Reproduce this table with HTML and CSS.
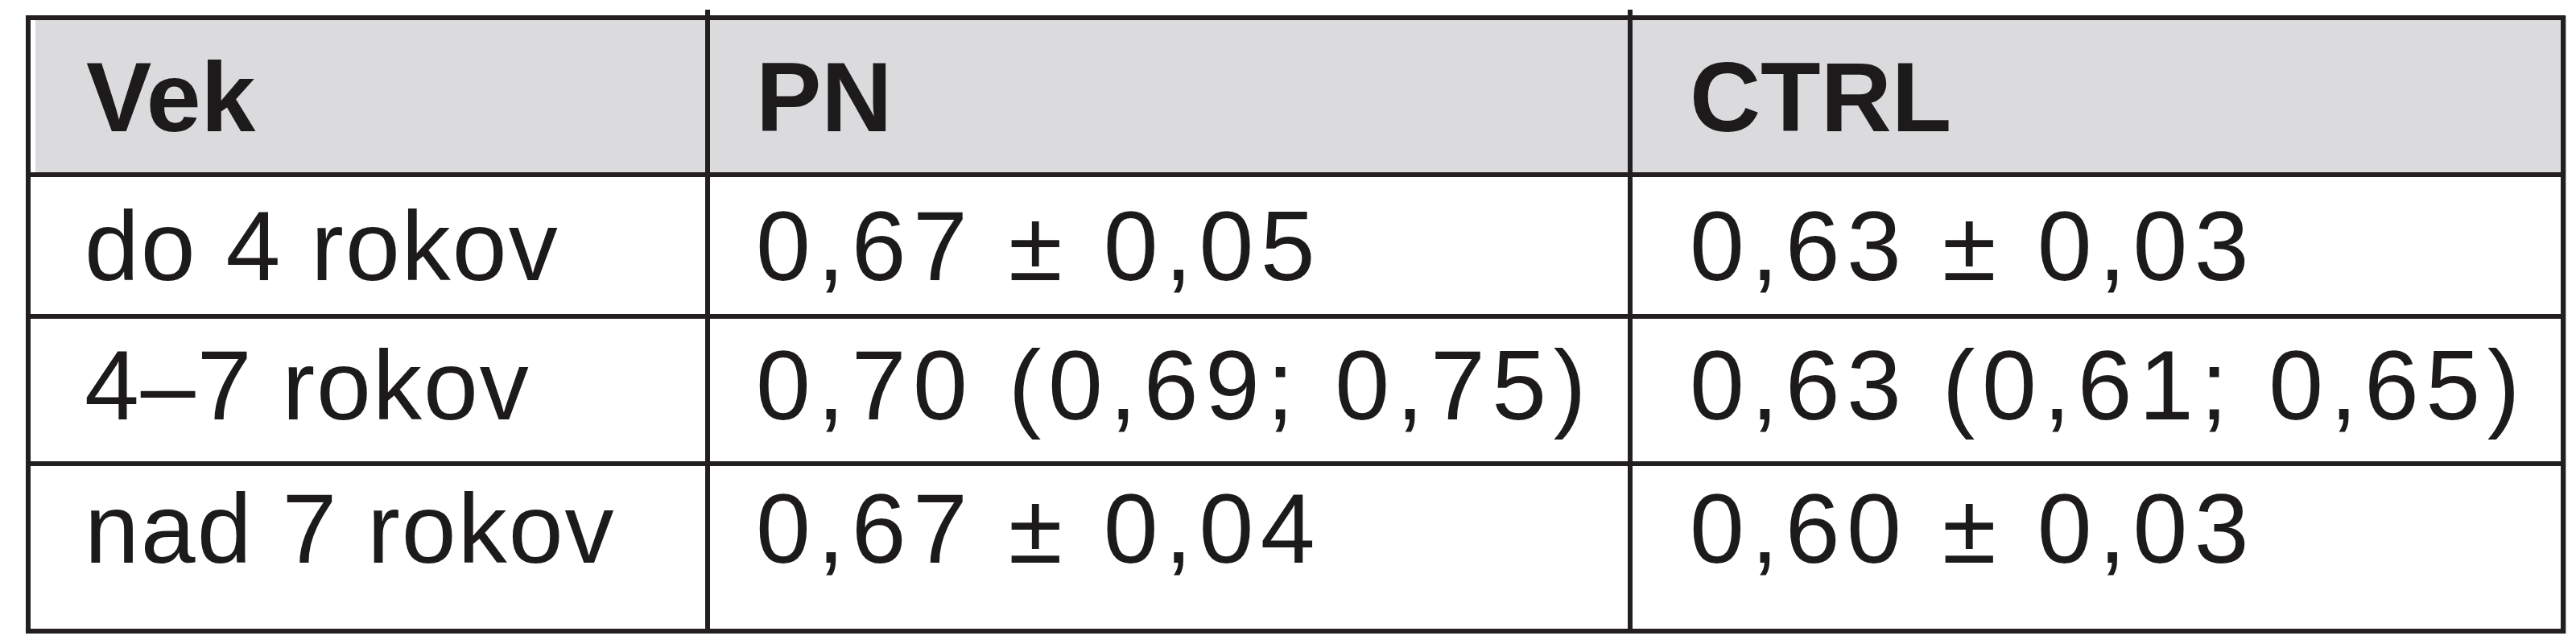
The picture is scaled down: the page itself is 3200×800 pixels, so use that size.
FILE: index.html
```html
<!DOCTYPE html>
<html lang="sk">
<head>
<meta charset="utf-8">
<title>Vek PN CTRL</title>
<link rel="stylesheet" href="styles.css">
</head>
<body>
<div class="page">
  <div class="table">
    <div class="cell head c1">Vek</div>
    <div class="cell head c2">PN</div>
    <div class="cell head c3">CTRL</div>

    <div class="cell r1 c1 txt">do 4 rokov</div>
    <div class="cell r1 c2 num">0,67 ± 0,05</div>
    <div class="cell r1 c3 num">0,63 ± 0,03</div>

    <div class="cell r2 c1 txt">4–7 rokov</div>
    <div class="cell r2 c2 num">0,70 (0,69; 0,75)</div>
    <div class="cell r2 c3 num">0,63 (0,61; 0,65)</div>

    <div class="cell r3 c1 txt">nad 7 rokov</div>
    <div class="cell r3 c2 num">0,67 ± 0,04</div>
    <div class="cell r3 c3 num">0,60 ± 0,03</div>
  </div>
</div>
</body>
</html>
```
FILE: styles.css
```css
html, body {
  margin: 0;
  padding: 0;
  background: #ffffff;
}

.page {
  padding: 19px 0 0 32px;
}

.table {
  position: relative;
  display: grid;
  grid-template-columns: 838px 1140px 1153px;
  grid-template-rows: 189px 170px 177px 202px;
  gap: 6px;
  padding: 6px;
  width: max-content;
  background: #231f20;
  box-shadow: 1px 1px 0 #b8b8b8;
  font-family: "Liberation Sans", Arial, sans-serif;
  font-size: 122px;
  line-height: 1;
  color: #1d1a1b;
}

.cell {
  position: relative;
  background: #ffffff;
  padding-top: 22px;
  white-space: nowrap;
  box-sizing: border-box;
}

.head {
  background: #dbdbdd;
  font-weight: 700;
  padding-top: 35px;
}

.c1 { padding-left: 67px; }
.c2 { padding-left: 57px; }
.c3 { padding-left: 71px; }

.head.c1 {
  border-left: 6px solid #ffffff;
  padding-left: 63px;
}

.head.c2::before,
.head.c3::before {
  content: "";
  position: absolute;
  left: -6px;
  top: -13px;
  width: 6px;
  height: 7px;
  background: #231f20;
}

.r1 { padding-top: 25px; }
.r2 { padding-top: 22px; }
.r3 { padding-top: 17px; }

.txt { letter-spacing: 2px; }
.num { letter-spacing: 8.5px; }
```
